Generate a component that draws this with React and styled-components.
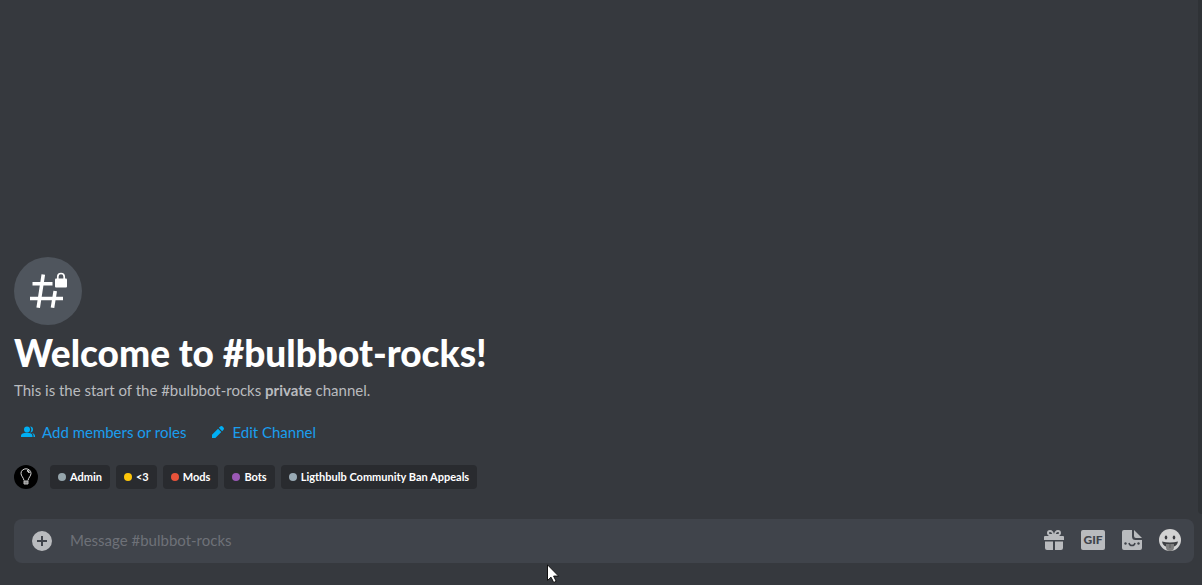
import React from "react";
import styled, { createGlobalStyle } from "styled-components";

const GlobalStyle = createGlobalStyle`
  * { box-sizing: border-box; }
  html, body { margin: 0; background: #36393e; }
  body, button, input { font-family: Lato, "Open Sans", sans-serif; }
`;

const Page = styled.main`
  position: relative;
  display: flex;
  flex-direction: column;
  min-height: 100vh;
  padding-bottom: 22px;
  background: #36393e;
  color: #b9bbbe;
`;

const Messages = styled.div`
  display: flex;
  flex: 1;
`;

const ScrollTrack = styled.div`
  width: 4px;
  margin-bottom: 5px;
  border-bottom-left-radius: 4px;
  background: #2f3236;
`;

const Intro = styled.section`
  display: flex;
  flex: 1;
  flex-direction: column;
  align-items: flex-start;
  justify-content: flex-end;
  padding: 0 14px 30px;
`;

const ChannelBadge = styled.div`
  width: 68px;
  height: 68px;
  border-radius: 50%;
  background: #4f555d;
  svg { display: block; }
`;

const Title = styled.h1`
  margin: 8px 0 7px;
  color: #fff;
  font-size: 37px;
  font-weight: 900;
  line-height: 40px;
`;

const Description = styled.p`
  margin: 0;
  font-size: 15px;
  line-height: 20px;
`;

const Actions = styled.div`
  display: flex;
  gap: 12px;
  margin: 16px 0 17px;
`;

const ActionButton = styled.button`
  display: flex;
  align-items: center;
  gap: 6px;
  height: 32px;
  padding: 0 6px;
  border: 0;
  background: none;
  color: #1a9eee;
  font-size: 15px;
  line-height: 20px;
  cursor: pointer;
  svg { color: #00aff4; }
`;

const Access = styled.ul`
  display: flex;
  gap: 6px;
  margin: 0;
  padding: 0;
  list-style: none;
`;

const Member = styled.li`
  width: 24px;
  height: 24px;
  margin-right: 6px;
  border-radius: 50%;
  background: #000;
  svg { display: block; }
`;

const Role = styled.li`
  display: flex;
  align-items: center;
  gap: 4px;
  height: 24px;
  padding: 0 8px;
  border-radius: 4px;
  background: #292b2f;
  color: #fff;
  font-size: 11px;
  font-weight: 700;
  line-height: 16px;
  &::before {
    content: "";
    width: 8px;
    height: 8px;
    border-radius: 50%;
    background: ${(p) => p.$color};
  }
`;

const Composer = styled.form`
  display: flex;
  align-items: center;
  height: 44px;
  margin: 0 8px 0 14px;
  padding: 0 13px 0 16px;
  border-radius: 8px;
  background: #40444b;
`;

const IconButton = styled.button`
  display: flex;
  padding: 0;
  border: 0;
  background: none;
  color: #b9bbbe;
  cursor: pointer;
`;

const MessageInput = styled.input`
  flex: 1;
  min-width: 0;
  height: 44px;
  padding: 0 16px 2px;
  border: 0;
  outline: 0;
  background: none;
  color: #dcddde;
  font-size: 15px;
  &::placeholder { color: #6e7178; opacity: 1; }
`;

const Tools = styled.div`
  display: flex;
  align-items: center;
  gap: 15px;
  padding-bottom: 2px;
`;

const Pointer = styled.svg`
  position: absolute;
  left: 547px;
  bottom: 1px;
`;

const roles = [
  ["Admin", "#95a5ab"],
  ["<3", "#fdc60a"],
  ["Mods", "#e8533a"],
  ["Bots", "#9b59b6"],
  ["Ligthbulb Community Ban Appeals", "#99aab5"],
];

function PrivateHash() {
  return (
    <svg width="68" height="68" viewBox="0 0 68 68" fill="none" aria-hidden="true">
      <g stroke="#fff" strokeWidth="3.600" strokeLinejoin="round">
        <path d="M29.300 17.500 24.200 50.800M41.200 34 38.500 50.800M18.500 26.800H38.500M16 41.500H49" />
      </g>
      <rect x="41" y="21.500" width="12" height="9" rx="1" fill="#fff" />
      <path d="M43.800 22v-2.300a3.200 3.200 0 0 1 6.400 0V22" stroke="#fff" strokeWidth="1.700" />
    </svg>
  );
}

function PeopleIcon() {
  return (
    <svg width="16" height="16" viewBox="0 0 16 16" fill="currentColor" aria-hidden="true">
      <circle cx="7" cy="5.500" r="3" />
      <path d="M1 13v-1c0-2 2.500-3.200 6-3.200S12.500 10 12.500 12v1zM10 2.500a3 3 0 0 1 0 6 4 4 0 0 0 0-6zM12 9c2 .6 3 1.700 3 3v1h-1.500v-1c0-1.200-.5-2.200-1.500-3z" />
    </svg>
  );
}

function PencilIcon() {
  return (
    <svg width="16" height="16" viewBox="0 0 24 24" fill="currentColor" aria-hidden="true">
      <path fillRule="evenodd" d="m20 9-1.800 1.800-5-5L15 4a3 3 0 0 1 4.300 0l.7.700A3 3 0 0 1 20 9zM3 21h5l9-9-5-5-9 9v5z" />
    </svg>
  );
}

function BulbIcon() {
  return (
    <svg width="24" height="24" viewBox="0 0 24 24" fill="none" stroke="#d8d8d8" aria-hidden="true">
      <path d="M10 15.500C9.500 12.500 7 11 7 8.300a5 4.500 0 0 1 10 0c0 2.700-2.500 4.200-3 7.200" />
      <path d="M10 16h4v3h-4z" fill="#888" stroke="#bbb" strokeWidth="1" />
      <path d="M13 5.500c1.300.3 2 1.200 2.200 2.500" strokeWidth="1.500" />
    </svg>
  );
}

function PlusIcon() {
  return (
    <svg width="24" height="24" viewBox="0 0 24 24" aria-hidden="true">
      <path fill="currentColor" fillRule="evenodd" d="M12 2a10 10 0 1 0 0 20 10 10 0 0 0 0-20zm5 11h-4v4h-2v-4H7v-2h4V7h2v4h4v2z" />
    </svg>
  );
}

function GiftIcon() {
  return (
    <svg width="24" height="24" viewBox="0 0 24 24" fill="currentColor" aria-hidden="true">
      <path fillRule="evenodd" d="M16.900 8H21a1 1 0 0 1 1 1v3H2V9a1 1 0 0 1 1-1h4.200C5.900 7.500 5 6.300 5 5a3 3 0 0 1 3-3c2.300 0 3.500 1.800 4 4 .5-2.200 1.700-4 4-4a3 3 0 0 1 3 3c0 1.300-.9 2.500-2.100 3zM8 4a1 1 0 1 0 0 2h2.200C9.800 4.900 9.200 4 8 4zm8 0c-1.200 0-1.800.9-2.200 2H16a1 1 0 1 0 0-2zM3 13.500h8V22H5a2 2 0 0 1-2-2v-6.500zm10 0h8V20a2 2 0 0 1-2 2h-6v-8.500z" />
    </svg>
  );
}

const GifLabel = styled.span`
  width: 24px;
  height: 20px;
  border-radius: 2px;
  background: #b9bbbe;
  color: #40444b;
  font-size: 12px;
  font-weight: 900;
  line-height: 20px;
  text-align: center;
`;

function StickerIcon() {
  return (
    <svg width="24" height="24" viewBox="0 0 24 24" aria-hidden="true">
      <path fill="currentColor" d="M4 2h8v6.500A3.500 3.500 0 0 0 15.500 12H22v8a2 2 0 0 1-2 2H4a2 2 0 0 1-2-2V4a2 2 0 0 1 2-2zM14 2l8 8h-6a2 2 0 0 1-2-2V2z" />
      <g fill="#40444b"><circle cx="5.500" cy="15.500" r="1.200" /><circle cx="18.500" cy="15.500" r="1.200" /></g>
      <path d="M9 15c.3 1.700 1.500 2.500 3 2.500s2.700-.8 3-2.500" fill="none" stroke="#40444b" strokeWidth="1.500" />
    </svg>
  );
}

function EmojiIcon() {
  return (
    <svg width="22" height="22" viewBox="0 0 22 22" aria-hidden="true">
      <circle cx="11" cy="11" r="11" fill="#d2d2d2" />
      <ellipse cx="7" cy="8.500" rx="1.300" ry="2" fill="#3b3c40" />
      <ellipse cx="15" cy="8.500" rx="1.300" ry="2" fill="#3b3c40" />
      <path d="M3 12.500c5 1.300 11 1.300 16 0-.4 2.900-2.500 4.500-4 5H7c-1.500-.5-3.600-2.100-4-5z" fill="#3f4043" />
      <path d="M7 15h8v3a4 4 0 0 1-8 0z" fill="#7d7d7d" />
      <path d="M11 15v4" stroke="#5f5f5f" />
    </svg>
  );
}

export default function App() {
  return (
    <>
      <GlobalStyle />
      <Page>
        <Messages>
          <Intro>
            <ChannelBadge><PrivateHash /></ChannelBadge>
            <Title>Welcome to #bulbbot-rocks!</Title>
            <Description>
              This is the start of the #bulbbot-rocks <strong>private</strong> channel.
            </Description>
            <Actions>
              <ActionButton type="button"><PeopleIcon />Add members or roles</ActionButton>
              <ActionButton type="button"><PencilIcon />Edit Channel</ActionButton>
            </Actions>
            <Access>
              <Member><BulbIcon /></Member>
              {roles.map(([name, color]) => (
                <Role key={name} $color={color}>{name}</Role>
              ))}
            </Access>
          </Intro>
          <ScrollTrack />
        </Messages>
        <Composer>
          <IconButton type="button" aria-label="Add attachment"><PlusIcon /></IconButton>
          <MessageInput aria-label="Message #bulbbot-rocks" placeholder="Message #bulbbot-rocks" />
          <Tools>
            <IconButton type="button" aria-label="Send a gift"><GiftIcon /></IconButton>
            <IconButton type="button"><GifLabel>GIF</GifLabel></IconButton>
            <IconButton type="button" aria-label="Open sticker picker"><StickerIcon /></IconButton>
            <IconButton type="button" aria-label="Select emoji"><EmojiIcon /></IconButton>
          </Tools>
        </Composer>
        <Pointer width="13" height="20" viewBox="0 0 13 20" aria-hidden="true">
          <path d="M.5.8v15.700l3.500-3.300 2.700 5.300 2.500-1.200-2.600-5.200h5L.5.800z" fill="#fff" stroke="#111" />
        </Pointer>
      </Page>
    </>
  );
}
